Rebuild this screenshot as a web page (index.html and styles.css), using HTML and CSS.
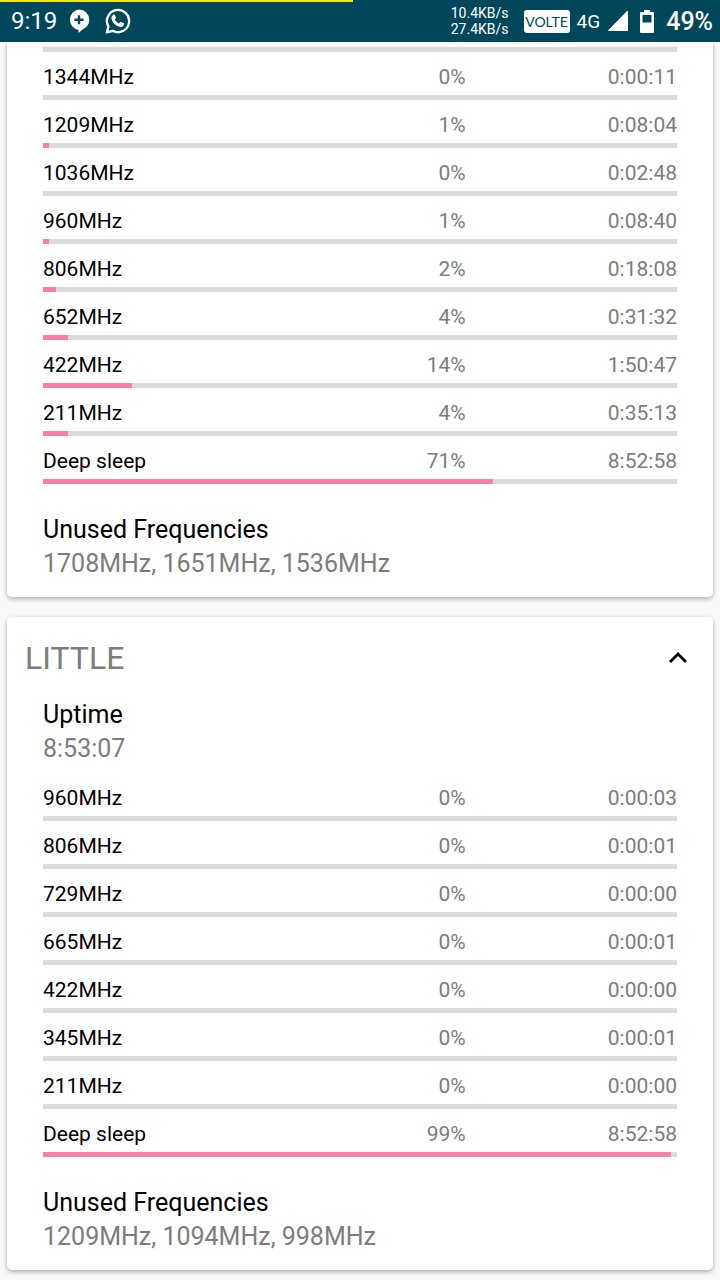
FILE: index.html
```html
<!DOCTYPE html>
<html lang="en">
    <head>
        <meta charset="UTF-8">
        <meta name="viewport" content="width=device-width, initial-scale=1.0">
        <title>Frequency Stats</title>

        <link rel="stylesheet" href="styles.css">
    </head>
    <body>
        <header class="status">
            <div class="download"></div>
            <span class="clock">9:19</span>
            <svg class="chat" viewBox="0 0 22 24" width="22" height="24">
                <path fill="#fff" d="M11 0.5a10.3 10.3 0 0 1 10.3 10.3c0 4.5-2.8 7.8-6.3 9.3L10.5 24v-3.1A10.3 10.3 0 0 1 11 0.5z"/>
                <path stroke="#00475b" stroke-width="2.4" d="M11 6.2v9M6.5 10.7h9"/>
            </svg>
            <svg class="whatsapp" viewBox="0 0 26 26" width="26" height="26">
                <path fill="none" stroke="#fff" stroke-width="2.3" stroke-linejoin="round" d="M1.8 24.4l1.6-5.8A11.1 11.1 0 1 1 7.7 22.8z"/>
                <path fill="#fff" d="M9 6.6c.5 0 .8.1 1 .6l.9 2.2c.1.4 0 .7-.2 1l-.9 1.1c.9 1.8 2.3 3.1 4.2 4l1.2-1.4c.3-.3.6-.4 1-.2l2.300 1.100c.4.2.6.4.5.9-.2 2-1.700 3-3.400 3-4.300-.2-9.200-5-9.200-9.100 0-1.300.7-2.300 1.500-2.900.3-.2.700-.3 1.100-.3z"/>
            </svg>
            <div class="speed">
                <span>10.4KB/s</span>
                <span>27.4KB/s</span>
            </div>
            <span class="volte">VOLTE</span>
            <span class="network">4G</span>
            <svg class="signal" viewBox="0 0 20 20" width="20" height="20">
                <path fill="#fff" d="M19 0h1v20H1q-1.500 0-.5-1z"/>
            </svg>
            <svg class="battery" viewBox="0 0 14 23" width="14" height="23">
                <path fill="#fff" fill-rule="evenodd" d="M4 0h6v2h3q1 0 1 1v19q0 1-1 1H1q-1 0-1-1V3q0-1 1-1h3zM2.500 5v7.500h9V5z"/>
            </svg>
            <span class="percent">49%</span>
        </header>

        <main>
            <section class="card first">
                <div class="bar"></div>
                <table>
                    <tr><th>1344MHz</th><td>0%</td><td>0:00:11</td></tr>
                    <tr><td colspan="3"><div class="bar"></div></td></tr>
                    <tr><th>1209MHz</th><td>1%</td><td>0:08:04</td></tr>
                    <tr><td colspan="3"><div class="bar"><div class="fill" style="width: 1%"></div></div></td></tr>
                    <tr><th>1036MHz</th><td>0%</td><td>0:02:48</td></tr>
                    <tr><td colspan="3"><div class="bar"></div></td></tr>
                    <tr><th>960MHz</th><td>1%</td><td>0:08:40</td></tr>
                    <tr><td colspan="3"><div class="bar"><div class="fill" style="width: 1%"></div></div></td></tr>
                    <tr><th>806MHz</th><td>2%</td><td>0:18:08</td></tr>
                    <tr><td colspan="3"><div class="bar"><div class="fill" style="width: 2%"></div></div></td></tr>
                    <tr><th>652MHz</th><td>4%</td><td>0:31:32</td></tr>
                    <tr><td colspan="3"><div class="bar"><div class="fill" style="width: 4%"></div></div></td></tr>
                    <tr><th>422MHz</th><td>14%</td><td>1:50:47</td></tr>
                    <tr><td colspan="3"><div class="bar"><div class="fill" style="width: 14%"></div></div></td></tr>
                    <tr><th>211MHz</th><td>4%</td><td>0:35:13</td></tr>
                    <tr><td colspan="3"><div class="bar"><div class="fill" style="width: 4%"></div></div></td></tr>
                    <tr><th>Deep sleep</th><td>71%</td><td>8:52:58</td></tr>
                    <tr><td colspan="3"><div class="bar"><div class="fill" style="width: 71%"></div></div></td></tr>
                </table>
                <div class="unused">
                    <h3>Unused Frequencies</h3>
                    <p>1708MHz, 1651MHz, 1536MHz</p>
                </div>
            </section>

            <section class="card">
                <div class="card-head">
                    <h2>LITTLE</h2>
                    <button aria-label="Collapse">
                        <svg viewBox="0 0 18 12" width="18" height="12">
                            <path fill="none" stroke="#000" stroke-width="2.8" d="M1 10L9 2l8 8"/>
                        </svg>
                    </button>
                </div>
                <div class="uptime">
                    <h3>Uptime</h3>
                    <p>8:53:07</p>
                </div>
                <table>
                    <tr><th>960MHz</th><td>0%</td><td>0:00:03</td></tr>
                    <tr><td colspan="3"><div class="bar"></div></td></tr>
                    <tr><th>806MHz</th><td>0%</td><td>0:00:01</td></tr>
                    <tr><td colspan="3"><div class="bar"></div></td></tr>
                    <tr><th>729MHz</th><td>0%</td><td>0:00:00</td></tr>
                    <tr><td colspan="3"><div class="bar"></div></td></tr>
                    <tr><th>665MHz</th><td>0%</td><td>0:00:01</td></tr>
                    <tr><td colspan="3"><div class="bar"></div></td></tr>
                    <tr><th>422MHz</th><td>0%</td><td>0:00:00</td></tr>
                    <tr><td colspan="3"><div class="bar"></div></td></tr>
                    <tr><th>345MHz</th><td>0%</td><td>0:00:01</td></tr>
                    <tr><td colspan="3"><div class="bar"></div></td></tr>
                    <tr><th>211MHz</th><td>0%</td><td>0:00:00</td></tr>
                    <tr><td colspan="3"><div class="bar"></div></td></tr>
                    <tr><th>Deep sleep</th><td>99%</td><td>8:52:58</td></tr>
                    <tr><td colspan="3"><div class="bar"><div class="fill" style="width: 99%"></div></div></td></tr>
                </table>
                <div class="unused">
                    <h3>Unused Frequencies</h3>
                    <p>1209MHz, 1094MHz, 998MHz</p>
                </div>
            </section>
        </main>
    </body>
</html>
```
FILE: styles.css
```css
* {
    box-sizing: border-box;
    margin: 0;
    padding: 0;
}

body {
    font-family: Roboto, "Liberation Sans", sans-serif;
    background: #f9f9f9;
    color: #000;
}

/* status bar */
.status {
    position: sticky;
    top: 0;
    z-index: 1;
    display: flex;
    align-items: center;
    height: 42px;
    padding: 0 7px 0 11px;
    background: #00475b;
    color: #fff;
}
.download {
    position: absolute;
    top: 0;
    left: 0;
    width: 49%;
    height: 2px;
    background: #f5e616;
}
.clock {
    font-size: 24px;
}
.chat {
    margin-left: 11px;
}
.whatsapp {
    margin-left: 15px;
}
.speed {
    display: grid;
    margin-left: auto;
    font-size: 14px;
    line-height: 16px;
}
.volte {
    margin: 0 7px 0 15px;
    width: 46px;
    border-radius: 3px;
    background: #fff;
    color: #00475b;
    font-family: Lato, sans-serif;
    font-size: 14px;
    line-height: 23px;
    text-align: center;
}
.network {
    font-size: 19px;
}
.signal {
    margin-left: 8px;
}
.battery {
    margin: 0 12px;
}
.percent {
    font-size: 25px;
    font-weight: 500;
}

/* cards */
.card {
    margin: 0 7px 20px;
    padding: 0 36px 16px;
    border-radius: 5px;
    background: #fff;
    box-shadow: 0 2px 5px rgba(0, 0, 0, 0.3);
}
.card:last-child {
    margin-bottom: 10px;
}
.first {
    padding-top: 5px;
    border-radius: 0 0 5px 5px;
}
.card-head {
    display: flex;
    justify-content: space-between;
    align-items: center;
    height: 81px;
    margin: 0 -10px 0 -18px;
}
h2 {
    font-size: 32px;
    font-weight: 400;
    color: #7c7c7c;
}
button {
    display: flex;
    border: none;
    background: none;
}
h3, p {
    font-size: 25px;
    font-weight: 400;
    line-height: 34px;
}
p {
    color: #7c7c7c;
}
.uptime {
    margin-bottom: 7px;
}
.unused {
    margin-top: 29px;
}

/* frequency rows */
table {
    width: 100%;
    table-layout: fixed;
    border-collapse: collapse;
}
th {
    height: 43px;
    padding-top: 6px;
    font-size: 21px;
    font-weight: 400;
    text-align: left;
}
td {
    font-size: 21px;
    text-align: right;
    color: #7c7c7c;
}
th ~ td {
    padding-top: 6px;
}
.bar {
    height: 5px;
    background: #dadada;
}
.fill {
    height: 5px;
    background: #f77fa8;
}
```
